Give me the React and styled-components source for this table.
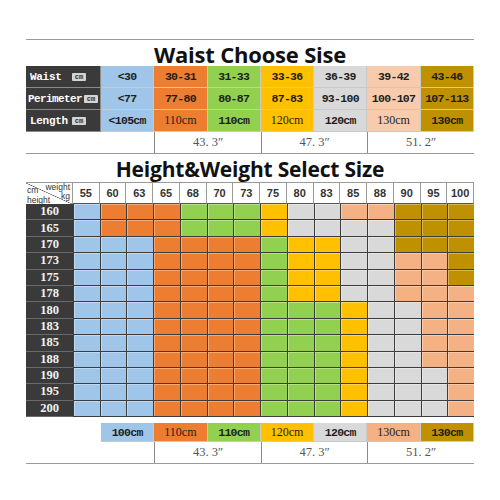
import React from "react";
import styled, { createGlobalStyle } from "styled-components";

const GlobalStyle = createGlobalStyle`
  body {
    margin: 0;
    background: #fff;
    font-family: "Liberation Sans", Arial, sans-serif;
  }
`;

const COLORS = {
  B: "#9fc5e8",
  O: "#ed7d31",
  G: "#92d050",
  Y: "#ffc000",
  S: "#d9d9d9",
  L: "#f8cbad",
  P: "#f4b183",
  K: "#bf9000",
};

const Page = styled.div`
  width: 448px;
  padding: 39px 0 0 26px;
`;

const Rule = styled.div`
  border-top: 1px solid #9a9a9a;
`;

const Title = styled.h2`
  margin: 0;
  height: ${(p) => p.$h}px;
  line-height: ${(p) => p.$h + 2}px;
  text-align: center;
  font-family: "Open Sans", sans-serif;
  font-weight: 700;
  font-size: ${(p) => p.$size}px;
  color: #111;
  letter-spacing: -0.2px;
`;

const SizeTable = styled.div`
  display: grid;
  grid-template-columns: 75px repeat(7, 1fr);
  grid-template-rows: ${(p) => p.$rows};
  border-bottom: 1px solid #9a9a9a;
  margin-top: ${(p) => p.$top || 0}px;
`;

const Label = styled.div`
  background: #3a3a3a;
  color: #fff;
  display: flex;
  align-items: center;
  padding: 0 2px 0 ${(p) => (p.$tight ? 2 : 4)}px;
  font-family: "Liberation Mono", monospace;
  font-weight: 700;
  font-size: 11px;
  letter-spacing: ${(p) => (p.$tight ? "-0.6px" : "-0.3px")};
  border-bottom: 1px solid #8a8a8a;
  border-right: 1px solid #8a8a8a;
`;

const Unit = styled.span`
  display: inline-block;
  width: 14px;
  height: 8px;
  line-height: 8px;
  margin-left: auto;
  margin-right: ${(p) => (p.$tight ? 0 : 12)}px;
  background: #d4d4d4;
  color: #333;
  font-size: 7px;
  letter-spacing: 0;
  text-align: center;
  border-radius: 1px;
`;

const Value = styled.div`
  background: ${(p) => COLORS[p.$c]};
  display: flex;
  align-items: center;
  justify-content: center;
  color: #1e1e1e;
  font-family: ${(p) =>
    p.$light ? '"Liberation Serif", serif' : '"Liberation Mono", monospace'};
  font-weight: ${(p) => (p.$light ? 400 : 700)};
  font-size: ${(p) => (p.$light ? 12 : 11.5)}px;
  letter-spacing: ${(p) => (p.$light ? "0" : "-0.7px")};
  border-right: 1px solid #c9c9c9;
  border-bottom: 1px solid #c9c9c9;
`;

const Blank = styled.div`
  grid-column: span ${(p) => p.$span || 1};
  background: #fff;
`;

const Inch = styled.div`
  grid-column: span 2;
  display: flex;
  align-items: center;
  justify-content: center;
  border-left: 1px solid #8a8a8a;
  color: #555;
  font-family: "Liberation Serif", serif;
  font-size: 12.5px;
`;

const Chart = styled.div`
  display: grid;
  grid-template-columns: 47px repeat(15, 1fr);
  grid-template-rows: 21px repeat(13, 16.4px);
  border-top: 1px solid #9a9a9a;
`;

const Corner = styled.div`
  position: relative;
  background: linear-gradient(
    to top right,
    transparent calc(50% - 0.6px),
    #555 50%,
    transparent calc(50% + 0.6px)
  );
  border-right: 1px solid #9a9a9a;
  font-family: "Liberation Sans", Arial, sans-serif;
  font-size: 8.5px;
  line-height: 8px;
  color: #333;
`;

const CornerText = styled.span`
  position: absolute;
  ${(p) => p.$pos}
`;

const Weight = styled.div`
  display: flex;
  align-items: center;
  justify-content: center;
  border-right: 1px solid #9a9a9a;
  border-bottom: 1px solid #555;
  font-family: "Liberation Sans", Arial, sans-serif;
  font-weight: 700;
  font-size: 11px;
  color: #333;
`;

const Height = styled.div`
  background: #3a3a3a;
  color: #f2f2f2;
  display: flex;
  align-items: center;
  justify-content: center;
  border-bottom: 1px solid #6a6a6a;
  font-family: "Liberation Serif", serif;
  font-weight: 700;
  font-size: 12.5px;
`;

const Swatch = styled.div`
  background: ${(p) => COLORS[p.$c]};
  border-left: 1px solid #3c3c3c;
  border-bottom: 1px solid #3c3c3c;
  box-shadow: inset 1px 1px 0 rgba(255, 255, 255, 0.35);
`;

const waist = [
  ["B", "<30", "<77", "<105cm", false],
  ["O", "30-31", "77-80", "110cm", true],
  ["G", "31-33", "80-87", "110cm", false],
  ["Y", "33-36", "87-83", "120cm", true],
  ["S", "36-39", "93-100", "120cm", false],
  ["L", "39-42", "100-107", "130cm", true],
  ["K", "43-46", "107-113", "130cm", false],
];

const bottom = [
  ["B", "100cm", false],
  ["O", "110cm", true],
  ["G", "110cm", false],
  ["Y", "120cm", true],
  ["S", "120cm", false],
  ["P", "130cm", true],
  ["K", "130cm", false],
];

const inches = ["43. 3″", "47. 3″", "51. 2″"];

const weights = [55, 60, 63, 65, 68, 70, 73, 75, 80, 83, 85, 88, 90, 95, 100];

const heights = [
  ["160", "BOOOGGGYSSPPKKK"],
  ["165", "BOOOGGGYSSSSKKK"],
  ["170", "BBBOOOOGYYSSKKK"],
  ["173", "BBBOOOOGYYSSPPK"],
  ["175", "BBBOOOOGYYSSPPK"],
  ["178", "BBBOOOOGYYSSPPP"],
  ["180", "BBBOOOOGGGYSSPP"],
  ["183", "BBBOOOOGGGYSSPP"],
  ["185", "BBBOOOOGGGYSSPP"],
  ["188", "BBBOOOOGGGYSSPP"],
  ["190", "BBBOOOOGGGYSSSP"],
  ["195", "BBBOOOOGGGYSSSP"],
  ["200", "BBBOOOOGGGYSSSP"],
];

function InchRow() {
  return (
    <>
      <Blank $span={2} />
      {inches.map((t) => (
        <Inch key={t}>{t}</Inch>
      ))}
    </>
  );
}

export default function App() {
  return (
    <Page>
      <GlobalStyle />
      <Rule />
      <Title $h={26} $size={22}>
        Waist Choose Sise
      </Title>
      <SizeTable $rows="22px 22px 22px 21px">
        <Label>
          Waist<Unit>cm</Unit>
        </Label>
        {waist.map(([c, v]) => (
          <Value key={v} $c={c}>
            {v}
          </Value>
        ))}
        <Label $tight>
          Perimeter<Unit $tight>cm</Unit>
        </Label>
        {waist.map(([c, , v]) => (
          <Value key={v} $c={c}>
            {v}
          </Value>
        ))}
        <Label>
          Length<Unit>cm</Unit>
        </Label>
        {waist.map(([c, , , v, light], i) => (
          <Value key={i} $c={c} $light={light}>
            {v}
          </Value>
        ))}
        <InchRow />
      </SizeTable>

      <Title $h={28} $size={21}>
        Height&amp;Weight Select Size
      </Title>
      <Chart>
        <Corner>
          <CornerText $pos="left: 1px; top: 3px;">cm</CornerText>
          <CornerText $pos="right: 2px; top: 0px;">weight</CornerText>
          <CornerText $pos="right: 2px; top: 9px;">kg</CornerText>
          <CornerText $pos="left: 1px; top: 13px;">height</CornerText>
        </Corner>
        {weights.map((w) => (
          <Weight key={w}>{w}</Weight>
        ))}
        {heights.map(([h, row]) => (
          <React.Fragment key={h}>
            <Height>{h}</Height>
            {row.split("").map((c, i) => (
              <Swatch key={i} $c={c} />
            ))}
          </React.Fragment>
        ))}
      </Chart>

      <SizeTable $rows="19px 21px" $top={6}>
        <Blank />
        {bottom.map(([c, v, light], i) => (
          <Value key={i} $c={c} $light={light}>
            {v}
          </Value>
        ))}
        <InchRow />
      </SizeTable>
    </Page>
  );
}
